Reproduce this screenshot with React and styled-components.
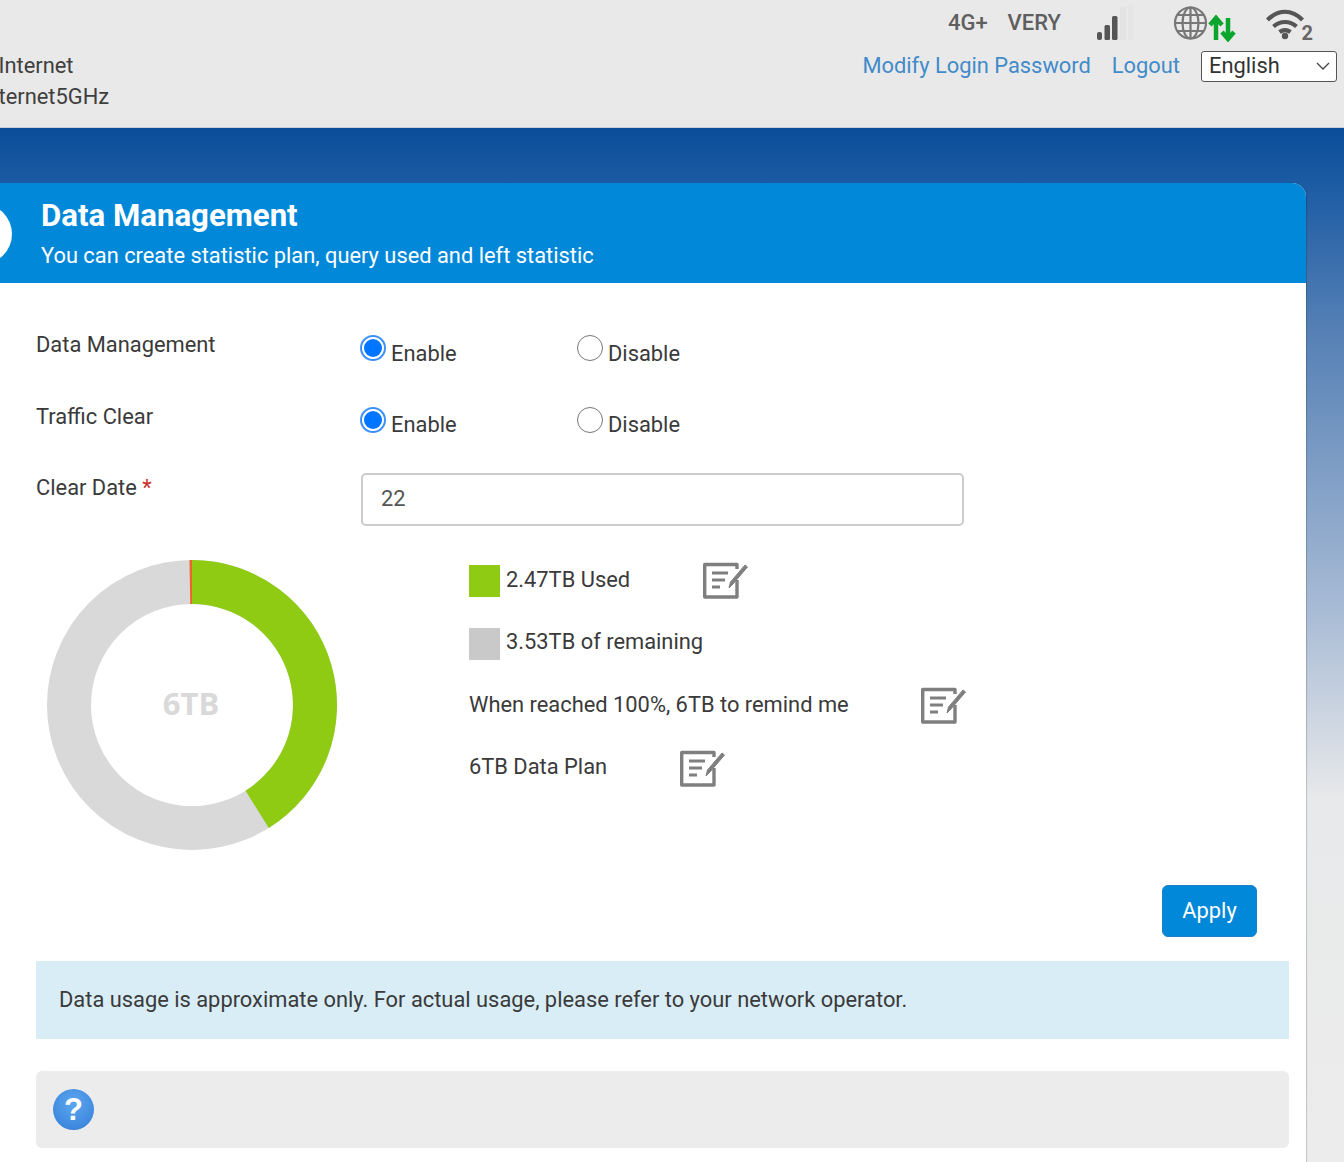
import React from 'react';
import styled, { createGlobalStyle } from 'styled-components';

const Global = createGlobalStyle`
  html, body { margin: 0; padding: 0; }
  body {
    width: 1344px;
    height: 1162px;
    overflow: hidden;
    font-family: Roboto, "Liberation Sans", sans-serif;
    color: #3a3a3a;
  }
`;

const Page = styled.div`
  width: 1344px;
  height: 1162px;
  display: flex;
  flex-direction: column;
  overflow: hidden;
`;

const TopBar = styled.header`
  height: 128px;
  flex: none;
  box-sizing: border-box;
  background: #e9e9e9;
  border-bottom: 1px solid #c9ced6;
  display: flex;
  justify-content: space-between;
`;

const NetworkNames = styled.div`
  padding-top: 55px;
  margin-left: -1.5px;
  display: flex;
  flex-direction: column;
  gap: 9px;
  font-size: 21.87px;
  line-height: 22px;
  color: #3f3f3f;
`;

const TopRight = styled.div`
  display: flex;
  flex-direction: column;
  align-items: flex-end;
  padding: 2px 7px 0 0;
`;

const StatusRow = styled.div`
  display: flex;
  align-items: center;
  height: 42px;
  padding-right: 21px;
`;

const StatusText = styled.span`
  font-size: 22px;
  font-weight: 500;
  color: #5f5f5f;
  margin: -2px ${p => p.$gap}px 0 0;
`;

const StatusIcon = styled.svg`
  display: block;
  margin-right: ${p => p.$gap || 0}px;
`;

const LinkRow = styled.div`
  display: flex;
  align-items: center;
  margin-top: 7px;
`;

const TopLink = styled.a`
  font-size: 21.87px;
  color: #428bca;
  margin: -2px ${p => p.$gap}px 0 0;
`;

const LangSelect = styled.div`
  width: 136px;
  height: 31px;
  box-sizing: border-box;
  border: 1px solid #555;
  border-radius: 3px;
  background: #fff;
  display: flex;
  align-items: center;
  justify-content: space-between;
  padding: 0 5px 2px 7px;
  font-size: 21.87px;
  color: #333;
`;

const Backdrop = styled.main`
  flex: 1;
  padding: 55px 38px 0 0;
  background: linear-gradient(
    180deg,
    #0b4d99 0%,
    #1a5aa3 5%,
    #5580b5 19.5%,
    #a5b9d4 45.6%,
    #e8e9ea 65%,
    #ececec 100%
  );
`;

const Card = styled.section`
  height: 100%;
  display: flex;
  flex-direction: column;
  background: #fff;
  border-top-right-radius: 14px;
  box-shadow: 1px 0 1px rgba(0, 0, 0, 0.18);
  overflow: hidden;
`;

const CardHead = styled.div`
  position: relative;
  height: 100px;
  flex: none;
  box-sizing: border-box;
  padding: 15px 0 0 41px;
  background: #0288d9;
  color: #fff;
`;

const HeadBadge = styled.span`
  position: absolute;
  left: -48px;
  top: 21px;
  width: 60px;
  height: 60px;
  border-radius: 50%;
  background: #fff;
`;

const HeadTitle = styled.h1`
  margin: 0;
  font-size: 31.2px;
  line-height: 36px;
  font-weight: 700;
`;

const HeadSub = styled.p`
  margin: 8px 0 0;
  font-size: 21.85px;
  line-height: 28px;
`;

const CardBody = styled.div`
  flex: 1;
  padding: 47px 17px 0 36px;
`;

const FormRow = styled.div`
  display: grid;
  grid-template-columns: 325px 1fr;
  height: 71.5px;
`;

const Label = styled.div`
  font-size: 21.87px;
  line-height: 30px;
  color: #3a3a3a;
`;

const Required = styled.span`
  color: #c9302c;
`;

const Options = styled.div`
  display: flex;
  margin-left: -1px;
`;

const RadioOption = styled.label`
  width: 217px;
  display: flex;
  align-items: flex-start;
  font-size: 21.87px;
  line-height: 30px;
  gap: 5px;
`;

const RadioLabel = styled.span`
  margin-top: 8.5px;
`;

const RadioDot = styled.span`
  width: 26px;
  height: 26px;
  margin-top: 5px;
  box-sizing: border-box;
  border-radius: 50%;
  border: ${p => (p.$on ? '2px solid #3d91f5' : '1.5px solid #767676')};
  background: #fff;
  display: flex;
  align-items: center;
  justify-content: center;
  &::after {
    content: '';
    display: ${p => (p.$on ? 'block' : 'none')};
    width: 18px;
    height: 18px;
    border-radius: 50%;
    background: #0075ff;
  }
`;

const DateInput = styled.div`
  width: 603px;
  height: 53px;
  box-sizing: border-box;
  border: 2px solid #ccc;
  border-radius: 5px;
  padding: 0 0 2px 18px;
  display: flex;
  align-items: center;
  font-size: 21.87px;
  color: #555;
`;

const UsageBlock = styled.div`
  display: flex;
  margin-top: 15px;
  height: 325.5px;
`;

const Donut = styled.svg`
  display: block;
  flex: none;
  margin-right: 123px;
`;

const DonutLabel = styled.text`
  font-family: "Open Sans", Roboto, sans-serif;
  font-size: 31px;
  font-weight: 700;
  fill: #d9d9d9;
`;

const Legend = styled.div`
  display: flex;
  flex-direction: column;
  gap: 24.5px;
  padding-top: 0.5px;
`;

const LegendRow = styled.div`
  height: 38px;
  display: flex;
  align-items: center;
  font-size: 21.87px;
`;

const Swatch = styled.span`
  width: 31px;
  height: 32px;
  margin: 4px 6px 0 0;
  background: ${p => p.$color};
  flex: none;
`;

const EditIcon = styled.svg`
  margin: 2px 0 0 ${p => p.$gap}px;
  display: block;
`;

const ActionRow = styled.div`
  display: flex;
  justify-content: flex-end;
  padding-right: 32px;
`;

const ApplyButton = styled.button`
  width: 95px;
  height: 52px;
  padding: 0 0 2px;
  border: 1px solid #1b7fc9;
  border-radius: 6px;
  background: #0288d9;
  color: #fff;
  font: 21.87px Roboto, sans-serif;
`;

const Notice = styled.div`
  margin-top: 24px;
  height: 78px;
  box-sizing: border-box;
  padding: 0 0 2px 23px;
  display: flex;
  align-items: center;
  background: #d9edf7;
  font-size: 21.87px;
  color: #3a3a3a;
`;

const HelpBar = styled.div`
  margin-top: 32px;
  height: 77px;
  padding-left: 17px;
  display: flex;
  align-items: center;
  border-radius: 6px;
  background: #ececec;
`;

const HelpIcon = styled.span`
  width: 41px;
  height: 41px;
  border-radius: 50%;
  background: radial-gradient(circle at 50% 35%, #5da6ee, #3f8ae0 70%, #2f74c8);
  color: #fff;
  font-family: "Liberation Sans", sans-serif;
  font-size: 31px;
  font-weight: 700;
  display: flex;
  align-items: center;
  justify-content: center;
`;

const Edit = ({ gap }) => (
  <EditIcon $gap={gap} width="46" height="38" viewBox="0 0 46 38" fill="none" stroke="#7f7f7f" strokeWidth="3.4" strokeLinejoin="round">
    <path d="M34 8V3.500H1.700V36H34V19" />
    <path d="M9 12h16M9 19h13M9 26h8" strokeWidth="3" />
    <path d="M26 27l1.500-6L42 4l2.500 2L30 23z" fill="#7f7f7f" strokeWidth="1" />
  </EditIcon>
);

const CX = 145;
const CY = 145;

const polar = (deg, r) => [
  CX + r * Math.sin((deg * Math.PI) / 180),
  CY - r * Math.cos((deg * Math.PI) / 180),
];

const arcPath = (from, to, R, r) => {
  const [x1, y1] = polar(from, R);
  const [x2, y2] = polar(to, R);
  const [x3, y3] = polar(to, r);
  const [x4, y4] = polar(from, r);
  const large = to - from > 180 ? 1 : 0;
  return `M${x1} ${y1}A${R} ${R} 0 ${large} 1 ${x2} ${y2}L${x3} ${y3}A${r} ${r} 0 ${large} 0 ${x4} ${y4}Z`;
};

const Radio = ({ on, text }) => (
  <RadioOption>
    <RadioDot $on={on} />
    <RadioLabel>{text}</RadioLabel>
  </RadioOption>
);

export default function App() {
  return (
    <Page>
      <Global />
      <TopBar>
        <NetworkNames>
          <span>Internet</span>
          <span>ternet5GHz</span>
        </NetworkNames>
        <TopRight>
          <StatusRow>
            <StatusText $gap={20}>4G+</StatusText>
            <StatusText $gap={35}>VERY</StatusText>
            <StatusIcon $gap={37} width="40" height="38" viewBox="0 0 40 38">
              <rect x="1" y="28" width="5" height="8" rx="2" fill="#555" />
              <rect x="8.500" y="21" width="5.500" height="15" rx="1.500" fill="#555" />
              <rect x="16" y="12" width="5.500" height="24" rx="1.500" fill="#555" />
              <rect x="24" y="3" width="6" height="33" rx="1.500" fill="#e3e3e3" />
              <rect x="32" y="0" width="6" height="36" rx="1.500" fill="#e6e6e6" />
            </StatusIcon>
            <StatusIcon $gap={27} width="64" height="38" viewBox="0 0 64 38">
              <g fill="none" stroke="#777" strokeWidth="2.200">
                <circle cx="17.500" cy="19" r="15.500" />
                <ellipse cx="17.500" cy="19" rx="8" ry="15.500" />
                <path d="M17.500 3.500v31M2 19h31M4.500 11h26M4.500 27h26" />
              </g>
              <path d="M43 36V15M37 21l6-7 6 7M55 14v21M49 28l6 7 6-7" fill="none" stroke="#0aa52c" strokeWidth="4.500" />
            </StatusIcon>
            <StatusIcon width="52" height="44" viewBox="0 -3 52 44">
              <path d="M3.500 16C14 5 28 5 38.500 16M9.500 22.500c7-6 16-6 23 0M15.500 28c3.500-2.500 7.500-2.500 11 0" fill="none" stroke="#555" strokeWidth="4.200" />
              <circle cx="21" cy="32" r="3.200" fill="#555" />
              <text x="37.500" y="36" fontFamily="Roboto" fontSize="20" fontWeight="700" fill="#666">2</text>
            </StatusIcon>
          </StatusRow>
          <LinkRow>
            <TopLink $gap={21}>Modify Login Password</TopLink>
            <TopLink $gap={21}>Logout</TopLink>
            <LangSelect>
              English
              <svg width="16" height="10" viewBox="0 0 16 10" fill="none" stroke="#444" strokeWidth="1.300">
                <path d="M2 2l6 6 6-6" />
              </svg>
            </LangSelect>
          </LinkRow>
        </TopRight>
      </TopBar>
      <Backdrop>
        <Card>
          <CardHead>
            <HeadBadge />
            <HeadTitle>Data Management</HeadTitle>
            <HeadSub>You can create statistic plan, query used and left statistic</HeadSub>
          </CardHead>
          <CardBody>
            <FormRow>
              <Label>Data Management</Label>
              <Options>
                <Radio on text="Enable" />
                <Radio text="Disable" />
              </Options>
            </FormRow>
            <FormRow>
              <Label>Traffic Clear</Label>
              <Options>
                <Radio on text="Enable" />
                <Radio text="Disable" />
              </Options>
            </FormRow>
            <FormRow>
              <Label>Clear Date <Required>*</Required></Label>
              <DateInput>22</DateInput>
            </FormRow>
            <UsageBlock>
              <Donut width="310" height="300" viewBox="-11 0 310 300">
                <circle cx={CX} cy={CY} r="123" fill="none" stroke="#d9d9d9" strokeWidth="44" />
                <path d={arcPath(0, 148, 145, 101)} fill="#8ecb12" />
                <path d={arcPath(-1, 0, 145, 101)} fill="#f0642c" />
                <DonutLabel x={CX - 1} y={CY + 10} textAnchor="middle">6TB</DonutLabel>
              </Donut>
              <Legend>
                <LegendRow><Swatch $color="#8ecb12" />2.47TB Used<Edit gap={73} /></LegendRow>
                <LegendRow><Swatch $color="#c9c9c9" />3.53TB of remaining</LegendRow>
                <LegendRow>When reached 100%, 6TB to remind me<Edit gap={72} /></LegendRow>
                <LegendRow>6TB Data Plan<Edit gap={73} /></LegendRow>
              </Legend>
            </UsageBlock>
            <ActionRow><ApplyButton>Apply</ApplyButton></ActionRow>
            <Notice>Data usage is approximate only. For actual usage, please refer to your network operator.</Notice>
            <HelpBar><HelpIcon>?</HelpIcon></HelpBar>
          </CardBody>
        </Card>
      </Backdrop>
    </Page>
  );
}
